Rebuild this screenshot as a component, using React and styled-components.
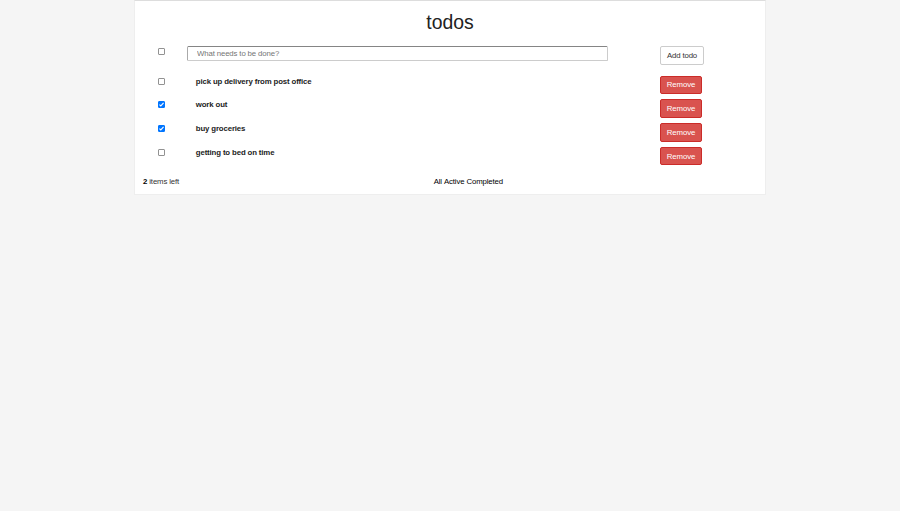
import React, { useState } from "react";
import styled, { createGlobalStyle } from "styled-components";

const GlobalStyle = createGlobalStyle`
  *, *::before, *::after { box-sizing: border-box; }
  body {
    margin: 0;
    background: #f5f5f5;
    color: #333;
    font: 7.8px/11px "Liberation Sans", Arial, sans-serif;
    letter-spacing: -0.13px;
  }
`;

const Panel = styled.main`
  width: 632px;
  height: 195px;
  margin: 0 auto;
  background: #fff;
  border: 1px solid #eee;
  border-top-color: #ddd;
`;

const Title = styled.h1`
  margin: 0;
  padding-top: 10px;
  height: 45px;
  font-size: 19.4px;
  line-height: 22px;
  font-weight: 400;
  letter-spacing: 0;
  text-align: center;
  color: #222;
`;

const Row = styled.div`
  display: grid;
  grid-template-columns: 52px 420.5px 1fr;
  height: ${(p) => p.$height || 23.75}px;
  align-items: start;
`;

const CheckLabel = styled.label`
  display: grid;
  width: 7px;
  height: 7px;
  margin: 2px 0 0 23px;

  > * { grid-area: 1 / 1; }
`;

const CheckInput = styled.input`
  appearance: none;
  width: 7px;
  height: 7px;
  margin: 0;
  border: 1px solid #929292;
  border-radius: 1px;
  background: #fff;

  &:checked { border-color: #0075ff; background: #0075ff; }
  &:not(:checked) + svg { display: none; }
`;

const Tick = styled.svg`
  width: 7px;
  height: 7px;
  pointer-events: none;
`;

const Field = styled.input`
  width: 420.5px;
  height: 15px;
  padding: 0 9px;
  border: 1px solid #ccc;
  border-top-color: #858585;
  border-left-color: #aaa;
  border-radius: 1.5px;
  font: inherit;
  letter-spacing: inherit;
  &::placeholder { color: #757575; }
`;

const Name = styled.strong`
  padding-left: 8.8px;
  font-weight: 700;
  color: #222;
`;

const Button = styled.button`
  width: ${(p) => (p.$danger ? 42 : 44)}px;
  height: ${(p) => (p.$danger ? 18.6 : 19)}px;
  margin-left: 52.5px;
  padding: 0;
  border: 1px solid ${(p) => (p.$danger ? "#cb2c29" : "#ccc")};
  border-radius: 2px;
  background: ${(p) => (p.$danger ? "#d9534f" : "#fff")};
  color: ${(p) => (p.$danger ? "#fff" : "#333")};
  font: inherit;
  letter-spacing: inherit;
`;

const Footer = styled.footer`
  display: grid;
  grid-template-columns: 290.7px 1fr;
  padding: 5px 0 0 8px;
`;

const Count = styled.span`
  color: #333;
  b { color: #000; }
`;

const Filters = styled.nav`
  display: flex;
  gap: 2px;
  color: #000;
`;

const items = [
  ["pick up delivery from post office", false],
  ["work out", true],
  ["buy groceries", true],
  ["getting to bed on time", false],
];

function Check(props) {
  return (
    <CheckLabel>
      <CheckInput type="checkbox" {...props} />
      <Tick viewBox="0 0 13 13">
        <path d="M2.7 6.7 5.2 9.2 10.3 3.6" fill="none" stroke="#fff" strokeWidth="2" />
      </Tick>
    </CheckLabel>
  );
}

export default function App() {
  const [text, setText] = useState("");
  return (
    <>
      <GlobalStyle />
      <Panel>
        <Title>todos</Title>
        <Row $height={29.6}>
          <Check aria-label="Toggle all" />
          <Field
            placeholder="What needs to be done?"
            value={text}
            onChange={(e) => setText(e.target.value)}
          />
          <Button>Add todo</Button>
        </Row>
        {items.map(([name, done]) => (
          <Row key={name}>
            <Check aria-label={name} defaultChecked={done} />
            <Name>{name}</Name>
            <Button $danger>Remove</Button>
          </Row>
        ))}
        <Footer>
          <Count><b>2</b> items left</Count>
          <Filters>
            <span>All</span>
            <span>Active</span>
            <span>Completed</span>
          </Filters>
        </Footer>
      </Panel>
    </>
  );
}
